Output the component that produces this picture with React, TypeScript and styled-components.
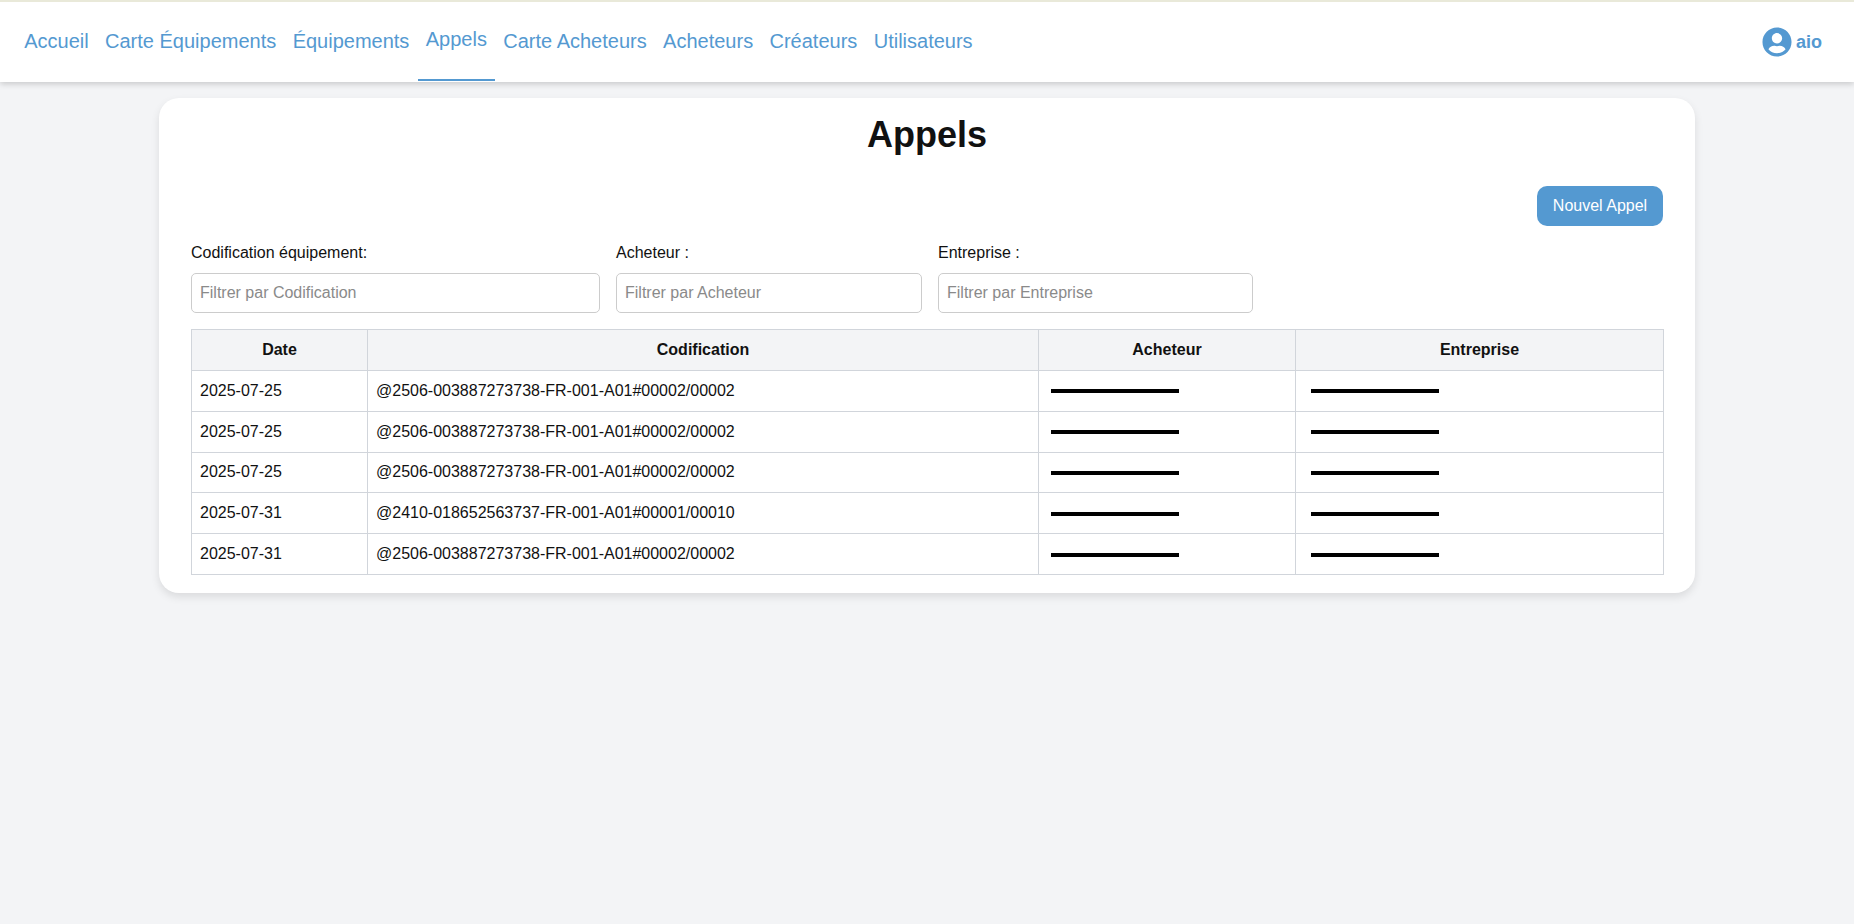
import React from "react";
import styled, { createGlobalStyle } from "styled-components";
import { FaUserCircle } from "react-icons/fa";

const Global = createGlobalStyle`
  html, body { margin: 0; padding: 0; background: #f3f4f6; }
  body { font-family: "Liberation Sans", Arial, sans-serif; color: #111; }
  * { box-sizing: border-box; }
`;
const Page = styled.div`min-height: 924px; background: #f3f4f6;`;
const TopBar = styled.header`
  height: 82px;
  background: #fff;
  border-top: 2px solid #e9e9d9;
  box-shadow: 0 2px 6px rgba(0,0,0,.18);
  display: flex;
  align-items: stretch;
  justify-content: space-between;
  padding: 0 32px 0 16px;
`;
const Tabs = styled.nav`display: flex; gap: 0;`;
const Tab = styled.a<{ $active?: boolean }>`
  display: flex;
  align-items: center;
  height: 79px;
  padding: 0 8.2px ${p => (p.$active ? "2px" : "0")};
  font-size: 20px;
  color: #5499d1;
  border-bottom: ${p => (p.$active ? "2px solid #5499d1" : "0")};
`;
const User = styled.div`
  display: flex;
  align-items: center;
  gap: 4px;
  height: 80px;
  color: #5499d1;
  font-weight: 700;
  font-size: 18px;
`;
const Card = styled.main`
  width: 1536px;
  margin: 16px auto 0;
  padding: 16px 32px;
  height: 495px;
  background: #fff;
  border-radius: 20px;
  box-shadow: 0 4px 8px rgba(0,0,0,.1);
`;
const Title = styled.h1`
  margin: 0;
  font-size: 36px;
  line-height: 41px;
  text-align: center;
  color: #111;
`;
const Actions = styled.div`display: flex; justify-content: flex-end; margin-top: 31px;`;
const Button = styled.button`
  width: 126px;
  height: 40px;
  border: 0;
  border-radius: 10px;
  background: #5499d1;
  color: #fff;
  font: 16px "Liberation Sans", Arial, sans-serif;
`;
const Filters = styled.div`display: flex; gap: 16px; margin-top: 18px;`;
const Filter = styled.label<{ $w: number }>`
  display: flex;
  flex-direction: column;
  gap: 11px;
  width: ${p => p.$w}px;
  font-size: 16px;
  line-height: 18px;
  color: #111;
`;
const Input = styled.input`
  height: 40px;
  width: 100%;
  padding: 0 8px;
  border: 1px solid #ccc;
  border-radius: 5px;
  font: 16px "Liberation Sans", Arial, sans-serif;
  &::placeholder { color: #8a8a8a; }
`;
const Table = styled.table`
  width: 1472px;
  margin-top: 16px;
  border-collapse: collapse;
  table-layout: fixed;
  font-size: 16px;
`;
const Th = styled.th`
  height: 41px;
  padding: 8px;
  background: #f3f4f6;
  border: 1px solid #d1d5db;
  font-weight: 700;
  text-align: center;
  color: #111;
`;
const Td = styled.td`
  height: 40.8px;
  padding: 8px;
  border: 1px solid #d1d5db;
  color: #111;
`;
const Bar = styled.span<{ $x: number }>`
  display: block;
  width: 128px;
  height: 4px;
  margin-left: ${p => p.$x}px;
  margin-top: 1px;
  background: #000;
`;

const rows = [
  ["2025-07-25", "@2506-003887273738-FR-001-A01#00002/00002"],
  ["2025-07-25", "@2506-003887273738-FR-001-A01#00002/00002"],
  ["2025-07-25", "@2506-003887273738-FR-001-A01#00002/00002"],
  ["2025-07-31", "@2410-018652563737-FR-001-A01#00001/00010"],
  ["2025-07-31", "@2506-003887273738-FR-001-A01#00002/00002"],
];
const tabs = ["Accueil", "Carte Équipements", "Équipements", "Appels", "Carte Acheteurs", "Acheteurs", "Créateurs", "Utilisateurs"];

export default function App() {
  return (
    <Page>
      <Global />
      <TopBar>
        <Tabs>
          {tabs.map(t => (
            <Tab key={t} $active={t === "Appels"}>{t}</Tab>
          ))}
        </Tabs>
        <User>
          <FaUserCircle size={30} />
          aio
        </User>
      </TopBar>
      <Card>
        <Title>Appels</Title>
        <Actions><Button>Nouvel Appel</Button></Actions>
        <Filters>
          <Filter $w={409}>Codification équipement:<Input placeholder="Filtrer par Codification" /></Filter>
          <Filter $w={306}>Acheteur :<Input placeholder="Filtrer par Acheteur" /></Filter>
          <Filter $w={315}>Entreprise :<Input placeholder="Filtrer par Entreprise" /></Filter>
        </Filters>
        <Table>
          <colgroup>
            <col style={{ width: 176 }} />
            <col style={{ width: 671 }} />
            <col style={{ width: 257 }} />
            <col style={{ width: 368 }} />
          </colgroup>
          <thead>
            <tr><Th>Date</Th><Th>Codification</Th><Th>Acheteur</Th><Th>Entreprise</Th></tr>
          </thead>
          <tbody>
            {rows.map((r, i) => (
              <tr key={i}>
                <Td>{r[0]}</Td>
                <Td>{r[1]}</Td>
                <Td><Bar $x={4} /></Td>
                <Td><Bar $x={7} /></Td>
              </tr>
            ))}
          </tbody>
        </Table>
      </Card>
    </Page>
  );
}
